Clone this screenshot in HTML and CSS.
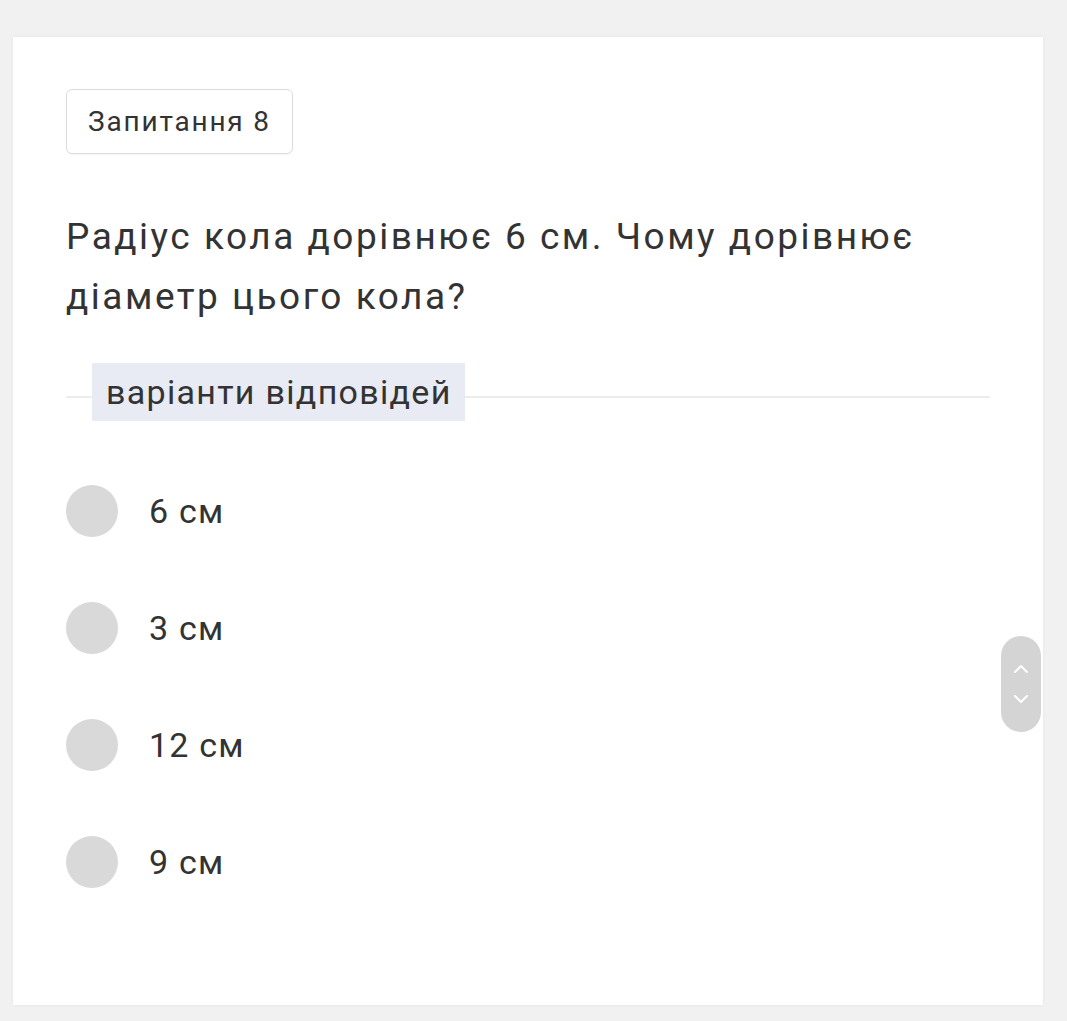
FILE: index.html
```html
<!DOCTYPE html>
<html>
  <head>
    <title>Запитання 8</title>
    <link rel="stylesheet" href="styles.css">
  </head>
  <body>
    <div class="card">
      <div class="badge">Запитання 8</div>

      <h1 class="question">Радіус кола дорівнює 6 см. Чому дорівнює діаметр цього кола?</h1>

      <div class="divider">
        <span class="divider-label">варіанти відповідей</span>
      </div>

      <ul class="options">
        <li class="option"><span class="radio"></span>6 см</li>
        <li class="option"><span class="radio"></span>3 см</li>
        <li class="option"><span class="radio"></span>12 см</li>
        <li class="option"><span class="radio"></span>9 см</li>
      </ul>
    </div>

    <div class="scroller">
      <svg width="16" height="10" viewBox="0 0 16 10"><path d="M2 8 L8 2 L14 8" fill="none" stroke="#fff" stroke-width="2" stroke-linecap="round" stroke-linejoin="round"/></svg>
      <svg width="16" height="10" viewBox="0 0 16 10"><path d="M2 2 L8 8 L14 2" fill="none" stroke="#fff" stroke-width="2" stroke-linecap="round" stroke-linejoin="round"/></svg>
    </div>
  </body>
</html>
```

FILE: styles.css
```css
body {
  margin: 0;
  padding: 37px 0 16px 13px;
  background-color: #f1f1f1;
  font-family: Roboto, "Noto Sans", Arial, sans-serif;
  color: #333;
}

.card {
  width: 1030px;
  height: 968px;
  box-sizing: border-box;
  padding: 52px 53px 0 53px;
  background-color: #fff;
  box-shadow: 0 0 3px rgba(0, 0, 0, 0.06);
}

.badge {
  display: inline-block;
  height: 65px;
  line-height: 63px;
  box-sizing: border-box;
  padding: 0 21px;
  border: 1px solid #dcdcdc;
  border-radius: 6px;
  font-size: 28px;
  letter-spacing: 1.8px;
  box-shadow: 0 1px 2px rgba(0, 0, 0, 0.04);
}

.question {
  margin: 53px 0 0 0;
  font-size: 37px;
  font-weight: 400;
  line-height: 60px;
  letter-spacing: 2.5px;
  color: #333;
}

.divider {
  position: relative;
  margin-top: 36px;
  height: 58px;
  display: flex;
  align-items: center;
}

.divider::before {
  content: "";
  position: absolute;
  left: 0;
  right: 0;
  top: 33px;
  border-top: 2px solid #ececec;
}

.divider-label {
  position: relative;
  margin-left: 26px;
  padding: 0 13px 0 14px;
  height: 58px;
  line-height: 58px;
  background-color: #e8eaf4;
  font-size: 34px;
  letter-spacing: 1.3px;
  color: #333;
}

.options {
  list-style: none;
  margin: 64px 0 0 0;
  padding: 0;
  display: flex;
  flex-direction: column;
  gap: 65px;
}

.option {
  display: flex;
  align-items: center;
  height: 52px;
  font-size: 34px;
  letter-spacing: 1.2px;
}

.radio {
  width: 52px;
  height: 52px;
  border-radius: 50%;
  background-color: #d9d9d9;
  margin-right: 31px;
}

.scroller {
  position: absolute;
  left: 1001px;
  top: 636px;
  width: 40px;
  height: 96px;
  border-radius: 20px;
  background-color: #d4d4d4;
  display: flex;
  flex-direction: column;
  align-items: center;
  justify-content: center;
  gap: 20px;
}
```
